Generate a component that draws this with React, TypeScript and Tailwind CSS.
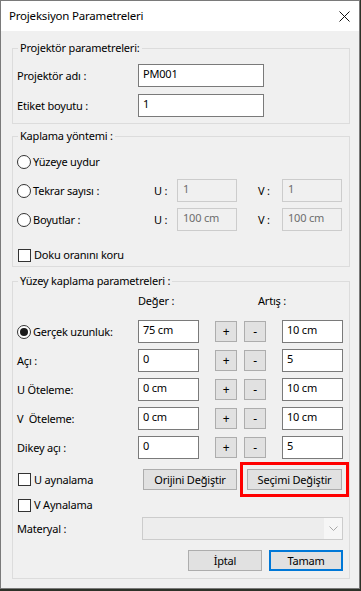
import React from "react";

const Field = ({ value, w, disabled }: { value: string; w: string; disabled?: boolean }) => (
  <div
    className={`${w} h-[23px] flex items-center pb-[3px] pl-[4px] border ${
      disabled ? "border-[#cccccc] bg-[#f0f0f0] text-[#6d6d6d] pl-[5px]" : "border-[#7a7a7a] bg-white text-black"
    }`}
  >
    {value}
  </div>
);

const Radio = ({ label, checked }: { label: string; checked?: boolean }) => (
  <div className="flex items-center gap-[2px]">
    <span className="w-[14px] h-[14px] rounded-full border border-[#333333] bg-white flex items-center justify-center">
      {checked && <span className="w-[8px] h-[8px] rounded-full bg-[#1a1a1a]" />}
    </span>
    <span>{label}</span>
  </div>
);

const Check = ({ label }: { label: string }) => (
  <div className="flex items-center gap-[3px] pl-[1px]">
    <span className="w-[13px] h-[13px] border border-[#333333] bg-white" />
    <span>{label}</span>
  </div>
);

const Btn = ({ children, w, primary }: { children: React.ReactNode; w: string; primary?: boolean }) => (
  <div
    className={`${w} h-[21px] flex items-center justify-center bg-[#e1e1e1] ${
      primary ? "border-2 border-[#0078d7]" : "border border-[#adadad]"
    }`}
  >
    {children}
  </div>
);

const Group = ({ title, mt, children }: { title: string; mt: string; children: React.ReactNode }) => (
  <fieldset className={`${mt} w-[338px] border border-[#dcdcdc]`}>
    <legend className="ml-[5px] px-[2px] leading-[16px]">{title}</legend>
    {children}
  </fieldset>
);

const ParamRow = ({ label, value, step, radio }: { label: string; value: string; step: string; radio?: boolean }) => (
  <div className="flex items-center h-[23px]">
    <div className="w-[121px] whitespace-pre">{radio ? <Radio label={label} checked /> : label}</div>
    <Field value={value} w="w-[61px]" />
    <Btn w="w-[22px] ml-[16px] text-[12px]">+</Btn>
    <Btn w="w-[22px] ml-[7px] text-[12px]">-</Btn>
    <div className="ml-[16px]">
      <Field value={step} w="w-[61px]" />
    </div>
  </div>
);

export default function App() {
  return (
    <div className="w-[361px] h-[591px] bg-[#2d3128] font-['Noto_Sans',sans-serif] text-[11px] tracking-[-0.2px] text-black leading-[16px]">
      <div className="w-[360px] h-[589px] border border-[#7a7a7a] bg-[#f0f0f0] flex flex-col">
        <div className="h-[30px] bg-white flex items-center justify-between pl-[8px] pr-[8px] text-[11.5px]">
          <span>Projeksiyon Parametreleri</span>
          <svg width="11" height="11" viewBox="0 0 11 11" className="mr-[1px]">
            <path d="M0.5 0.5 L10.5 10.5 M10.5 0.5 L0.5 10.5" stroke="#111" strokeWidth="1" />
          </svg>
        </div>

        <div className="pl-[11px] flex flex-col">
          <Group title="Projektör parametreleri:" mt="mt-[9px]">
            <div className="pl-[4px] pt-[8px] pb-[6px] flex flex-col gap-[7px]">
              <div className="flex items-center h-[23px]">
                <div className="w-[121px]">Projektör adı :</div>
                <Field value="PM001" w="w-[126px]" />
              </div>
              <div className="flex items-center h-[23px]">
                <div className="w-[121px]">Etiket boyutu :</div>
                <Field value="1" w="w-[126px]" />
              </div>
            </div>
          </Group>

          <Group title="Kaplama yöntemi :" mt="mt-[4px]">
            <div className="pl-[4px] pt-[6px] pb-[3px] flex flex-col">
              <div className="flex items-center h-[23px]">
                <Radio label="Yüzeye uydur" />
              </div>
              <div className="flex items-center h-[23px] mt-[6px]">
                <div className="w-[137px]">
                  <Radio label="Tekrar sayısı :" />
                </div>
                <div className="w-[23px]">U :</div>
                <Field value="1" w="w-[60px]" disabled />
                <div className="w-[24px] ml-[21px]">V :</div>
                <Field value="1" w="w-[60px]" disabled />
              </div>
              <div className="flex items-center h-[23px] mt-[6px]">
                <div className="w-[137px]">
                  <Radio label="Boyutlar :" />
                </div>
                <div className="w-[23px]">U :</div>
                <Field value="100 cm" w="w-[60px]" disabled />
                <div className="w-[24px] ml-[21px]">V :</div>
                <Field value="100 cm" w="w-[60px]" disabled />
              </div>
              <div className="flex items-center h-[16px] mt-[16px]">
                <Check label="Doku oranını koru" />
              </div>
            </div>
          </Group>

          <Group title="Yüzey kaplama parametreleri :" mt="mt-[6px]">
            <div className="pl-[4px] pt-[4px] pb-[7px] flex flex-col">
              <div className="flex items-center h-[16px]">
                <div className="w-[121px]" />
                <div className="w-[120px]">Değer :</div>
                <div>Artış :</div>
              </div>
              <div className="flex flex-col gap-[6px] mt-[11px]">
                <ParamRow label="Gerçek uzunluk:" value="75 cm" step="10 cm" radio />
                <ParamRow label="Açı :" value="0" step="5" />
                <ParamRow label="U Öteleme:" value="0 cm" step="10 cm" />
                <ParamRow label="V  Öteleme:" value="0 cm" step="10 cm" />
                <ParamRow label="Dikey açı :" value="0" step="5" />
              </div>
              <div className="flex items-center h-[21px] mt-[10px]">
                <div className="w-[126px]">
                  <Check label="U aynalama" />
                </div>
                <Btn w="w-[94px]">Orijini Değiştir</Btn>
                <div className="relative ml-[10px]">
                  <Btn w="w-[95px]">Seçimi Değiştir</Btn>
                  <span className="absolute -inset-[7px] border-[3px] border-[#ff0000]" />
                </div>
              </div>
              <div className="flex items-center h-[16px] mt-[7px]">
                <Check label="V Aynalama" />
              </div>
              <div className="flex items-center h-[23px] mt-[4px]">
                <div className="w-[125px]">Materyal :</div>
                <div className="w-[201px] h-[23px] border border-[#cccccc] flex">
                  <div className="flex-1 bg-[#ededed]" />
                  <div className="w-[18px] bg-[#f6f6f6] flex items-center justify-center">
                    <svg width="9" height="6" viewBox="0 0 9 6">
                      <path d="M0.5 0.5 L4.5 4.5 L8.5 0.5" fill="none" stroke="#a8a8a8" strokeWidth="1" />
                    </svg>
                  </div>
                </div>
              </div>
              <div className="flex justify-end gap-[7px] mt-[10px] pr-[6px]">
                <Btn w="w-[74px]">İptal</Btn>
                <Btn w="w-[74px]" primary>
                  Tamam
                </Btn>
              </div>
            </div>
          </Group>
        </div>
      </div>
    </div>
  );
}
